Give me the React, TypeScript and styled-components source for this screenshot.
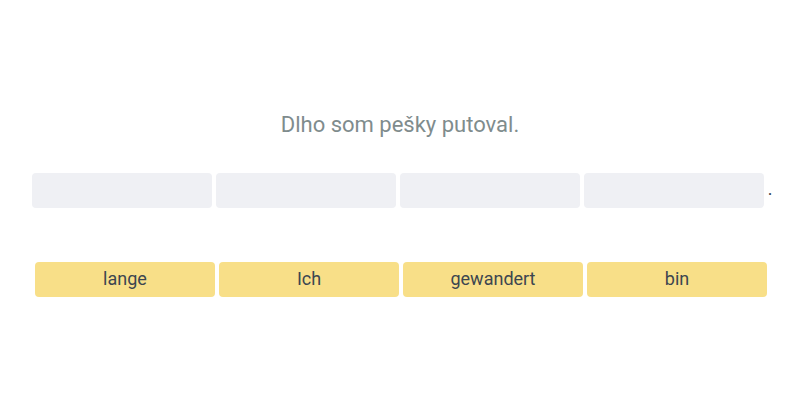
import styled, { createGlobalStyle } from 'styled-components'

const GlobalStyle = createGlobalStyle`
  html, body {
    margin: 0;
    padding: 0;
    background: #ffffff;
    font-family: Roboto, "Liberation Sans", sans-serif;
  }
`

const Page = styled.div`
  width: 800px;
  height: 400px;
  display: flex;
  flex-direction: column;
  align-items: center;
  padding-top: 112px;
  box-sizing: border-box;
`

const Prompt = styled.div`
  font-size: 22px;
  line-height: 26px;
  color: #7f8c8d;
`

const AnswerRow = styled.div`
  display: flex;
  align-items: center;
  gap: 4px;
  margin-top: 35px;
  padding-left: 4px;
`

const Slot = styled.div`
  width: 180px;
  height: 35px;
  border-radius: 4px;
  background: #eff0f4;
`

const Period = styled.span`
  font-size: 18px;
  color: #3c4650;
  margin-top: -5px;
`

const WordBank = styled.div`
  display: flex;
  gap: 4px;
  margin-top: 54px;
  padding-left: 2px;
`

const Word = styled.button`
  width: 180px;
  height: 35px;
  border: none;
  border-radius: 4px;
  background: #f8df88;
  color: #3c4650;
  font-family: inherit;
  font-size: 18px;
  padding: 0 0 2px;
  cursor: pointer;
`

const words = ['lange', 'Ich', 'gewandert', 'bin']

export default function App() {
  return (
    <>
      <GlobalStyle />
      <Page>
        <Prompt>Dlho som pešky putoval.</Prompt>
        <AnswerRow>
          {words.map((w) => (
            <Slot key={w} />
          ))}
          <Period>.</Period>
        </AnswerRow>
        <WordBank>
          {words.map((w) => (
            <Word key={w}>{w}</Word>
          ))}
        </WordBank>
      </Page>
    </>
  )
}
